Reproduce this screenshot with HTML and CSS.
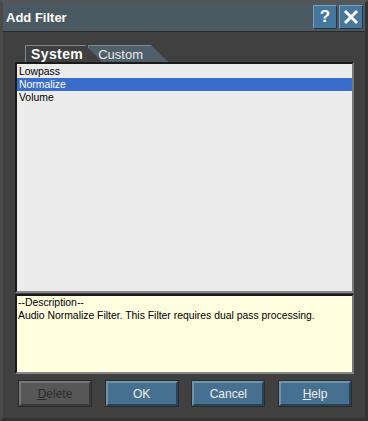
FILE: index.html
```html
<!DOCTYPE html>
<html lang="en">
<head>
    <meta charset="UTF-8">
    <title>Add Filter</title>
    <link rel="stylesheet" href="styles.css">
</head>
<body>
    <div class="dialog">
        <!-- Title bar -->
        <div class="titlebar">
            <span class="title">Add Filter</span>
            <div class="title-buttons">
                <span class="tbtn">?</span>
                <span class="tbtn">
                    <svg width="16" height="16" viewBox="0 0 16 16"><path d="M2 2 L14 14 M14 2 L2 14" stroke="#fff" stroke-width="3"/></svg>
                </span>
            </div>
        </div>

        <div class="content">
            <!-- Tabs -->
            <div class="tabs">
                <div class="tab active">System</div>
                <div class="tab">Custom</div>
            </div>

            <!-- Filter list -->
            <div class="list">
                <div class="item">Lowpass</div>
                <div class="item selected">Normalize</div>
                <div class="item">Volume</div>
            </div>

            <!-- Description -->
            <div class="desc">
                <div>--Description--</div>
                <div>Audio Normalize Filter. This Filter requires dual pass processing.</div>
            </div>

            <!-- Buttons -->
            <div class="buttons">
                <button class="btn disabled"><u>D</u>elete</button>
                <button class="btn">OK</button>
                <button class="btn">Cancel</button>
                <button class="btn"><u>H</u>elp</button>
            </div>
        </div>
    </div>
</body>
</html>
```

FILE: styles.css
```css
/* General */
body, html {
    margin: 0;
    padding: 0;
    height: 100%;
    background: #3e3e3e;
    font-family: "Liberation Sans", Arial, sans-serif;
}

.dialog {
    width: 368px;
    height: 421px;
    box-sizing: border-box;
    background: #404040;
    border: 3px solid #333;
    border-top-color: #555;
    border-left-color: #4a4a4a;
    display: flex;
    flex-direction: column;
}

/* Title bar */
.titlebar {
    height: 28px;
    background: #4b5963;
    border-bottom: 1px solid #2a2a2a;
    display: flex;
    align-items: center;
    justify-content: space-between;
    padding: 0 2px 0 3px;
}

.title {
    color: #fff;
    font-weight: bold;
    font-size: 13px;
}

.title-buttons {
    display: flex;
    gap: 2px;
}

.tbtn {
    width: 22px;
    height: 22px;
    background: #46779c;
    border: 1px solid;
    border-color: #7aa0bd #24384a #24384a #7aa0bd;
    color: #fff;
    font-weight: bold;
    font-size: 17px;
    display: flex;
    align-items: center;
    justify-content: center;
}

/* Content */
.content {
    flex: 1;
    padding: 13px 11px 0 12px;
    display: flex;
    flex-direction: column;
}

.tabs {
    display: flex;
    padding-left: 10px;
    height: 17px;
}

.tab {
    position: relative;
    height: 17px;
    box-sizing: border-box;
    padding: 1px 24px 0 9px;
    font-size: 13px;
    color: #e8e8e8;
    background: #50606a;
    border: 1px solid #7b8890;
    border-bottom: none;
    clip-path: polygon(0 0, calc(100% - 17px) 0, 100% 100%, 0 100%);
    margin-right: -14px;
}

.tab.active {
    z-index: 1;
    background: #404040;
    color: #fff;
    font-weight: bold;
    font-size: 14px;
    letter-spacing: 0.4px;
    padding: 0 18px 0 5px;
}

.list {
    height: 226px;
    background: #ececec;
    border: 2px solid #1a1a1a;
    border-right-color: #777;
    border-bottom-color: #888;
    padding-top: 1px;
}

.item {
    height: 13px;
    line-height: 13px;
    font-size: 10.4px;
    color: #000;
    padding-left: 2px;
}

.item.selected {
    background: #3a6dc9;
    color: #fff;
}

.desc {
    margin-top: 1px;
    height: 76px;
    background: #ffffe0;
    border: 2px solid #1a1a1a;
    border-right-color: #777;
    border-bottom-color: #888;
    font-size: 10.4px;
    line-height: 13px;
    padding: 0 1px;
    color: #000;
}

/* Buttons */
.buttons {
    display: flex;
    justify-content: space-between;
    margin-top: 7px;
    padding: 0 3px 0 4px;
}

.btn {
    width: 72px;
    height: 25px;
    font-family: "Liberation Sans", Arial, sans-serif;
    font-size: 12px;
    color: #eee;
    background: #46708f;
    border: 2px solid;
    border-color: #6f93ad #2a4254 #2a4254 #6f93ad;
    outline: 1px solid #2c2c2c;
    padding: 0;
}

.btn.disabled {
    background: #575757;
    color: #2a2a2a;
    border-color: #777 #3a3a3a #3a3a3a #777;
}
```
